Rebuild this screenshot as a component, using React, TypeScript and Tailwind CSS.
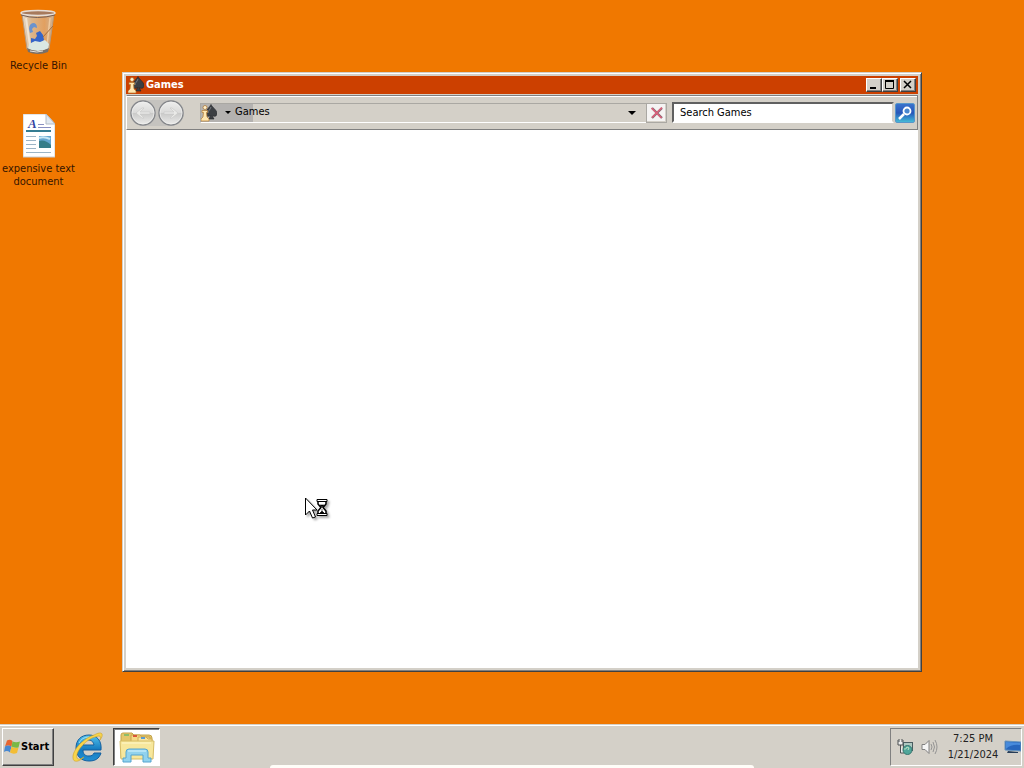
import type { ReactNode } from "react";

const RAISED =
  "border border-t-white border-l-white border-r-[#404040] border-b-[#404040] shadow-[inset_-1px_-1px_0_#808080]";

function RecycleBinIcon() {
  return (
    <svg width="38" height="46" viewBox="0 0 38 46" aria-hidden="true">
      <defs>
        <linearGradient id="glass" x1="0" x2="1">
          <stop offset="0" stopColor="#e4d9cb" />
          <stop offset="0.300" stopColor="#dbb58a" />
          <stop offset="0.700" stopColor="#e2a060" />
          <stop offset="1" stopColor="#cdb296" />
        </linearGradient>
      </defs>
      <path d="M3 5 L8 40 Q19 46 30 40 L35 5Z" fill="url(#glass)" stroke="#b89a7c" />
      <path d="M7 9 L11 37" stroke="#efe3d2" strokeWidth="2" />
      <path d="M31 9 L28 37" stroke="#edc99f" strokeWidth="1.500" />
      <path d="M10 20 q0-5 4-6 q4 0 4 5 l-3-1 -2 2 1 3-3 1Z" fill="#6b93ce" />
      <path d="M17 24 l4-2 3 4 1 5-3 3-4-1-6 1 0-5 4 1 2-3Z" fill="#3565c8" />
      <path d="M10 35 l6-3 5 1 5-2 4 4-1 5 Q18 44 9 40Z" fill="#dae8e3" />
      <path d="M8 39 Q19 45 30 39 L29 43 Q19 47 9 43Z" fill="#79706a" />
      <path d="M11 42 Q18 44 24 42" stroke="#e5e1db" fill="none" />
      <path d="M24 28 L34 17" stroke="#a86d39" />
      <ellipse cx="19" cy="4" rx="17" ry="2.500" fill="#a77a5c" stroke="#e7ddd5" strokeWidth="1.500" />
      <path d="M2 6 Q18 11 36 6" fill="none" stroke="#765e54" />
    </svg>
  );
}

function DocumentIcon() {
  return (
    <svg width="32" height="44" viewBox="0 0 32 44" aria-hidden="true">
      <path d="M0 0H23L32 10V43H0Z" fill="#fff" stroke="#c6ccd2" />
      <path d="M23 0V10H32Z" fill="#e2e9f0" stroke="#b2bcc8" />
      <text x="5" y="14" fontSize="13" fontStyle="italic" fontWeight="bold" fontFamily="Liberation Serif, serif" fill="#3445a3">A</text>
      <path d="M15 10.500H21M15 13.500H28" stroke="#8990c2" />
      <path d="M3 17H28" stroke="#347d92" strokeWidth="2" />
      <path d="M3 22.500H13M3 26.500H13M3 30.500H13M3 34.500H13M3 38.500H28" stroke="#9cb5c6" />
      <rect x="16" y="22" width="12" height="12" fill="#65a6cf" />
      <path d="M16 27 Q22 25 28 31V34H16Z" fill="#367d89" />
      <path d="M16 24Q21 22 27 25" stroke="#c8e7f4" strokeWidth="2" fill="none" />
    </svg>
  );
}

function GamesIcon() {
  return (
    <svg width="16" height="18" viewBox="0 0 16 18" aria-hidden="true">
      <path d="M10 0.500C9 3 4.500 6 4.500 9.500C4.500 12.500 8 13 9.500 11.500L8 15H13L11 11.500C13 13 16 12.500 16 9.500C16 6 11 3 10 0.500Z" fill="#3c3f43" stroke="#202226" strokeWidth="0.600" />
      <path d="M10 3C9 6 7 7 7 9" stroke="#777b80" fill="none" />
      <circle cx="4" cy="3.500" r="2" fill="#fff0c9" stroke="#a9702c" strokeWidth="0.700" />
      <path d="M1 6.500H6.500V8.500H5.500L6 13L8 15V17H0V15L2 13L2.500 8.500H1Z" fill="#ffe6b0" stroke="#b47b32" strokeWidth="0.700" />
    </svg>
  );
}

function NavIcon({ forward = false }: { forward?: boolean }) {
  return (
    <svg width="26" height="26" viewBox="0 0 26 26" aria-hidden="true">
      <defs>
        <linearGradient id={forward ? "forward-face" : "back-face"} x1="0" y1="0" x2="0" y2="1">
          <stop offset="0" stopColor="#efefee" />
          <stop offset="0.480" stopColor="#dadad9" />
          <stop offset="0.520" stopColor="#cacac9" />
          <stop offset="1" stopColor="#ececeb" />
        </linearGradient>
      </defs>
      <circle cx="13" cy="13" r="12" fill={forward ? "url(#forward-face)" : "url(#back-face)"} stroke="#85878b" strokeWidth="1.400" />
      <circle cx="13" cy="13" r="11" fill="none" stroke="#f1f1ef" strokeOpacity="0.700" />
      <path d={forward ? "M6 12H16L12 8H14L20 13L14 18H12L16 14H6Z" : "M20 12H10L14 8H12L6 13L12 18H14L10 14H20Z"} fill="#eaeae8" stroke="#c8c8c6" strokeWidth="0.600" />
    </svg>
  );
}

function WindowsIcon() {
  return (
    <svg width="16" height="16" viewBox="0 0 16 16" aria-hidden="true">
      <path d="M3 1.500Q6 0 8.500 2L7.500 7.500Q4 5.500 1 7.500Z" fill="#e76530" />
      <path d="M8.500 2.500Q12 4 16 2.500L14.500 8.500Q11 9.500 7.500 7.500Z" fill="#79b846" />
      <path d="M1 7.500Q4 5.500 7.500 7.500L6 13.500Q3 11 0 13Z" fill="#4888d0" />
      <path d="M7.500 7.500Q11 10 14.500 8.500L13 14Q9 15.500 6 13.500Z" fill="#f3bd35" />
    </svg>
  );
}

function ExplorerIcon() {
  return (
    <svg width="32" height="32" viewBox="0 0 32 32" aria-hidden="true">
      <defs>
        <linearGradient id="globe" x1="0" y1="0" x2="0" y2="1">
          <stop stopColor="#54c3ed" />
          <stop offset="0.550" stopColor="#147bc0" />
          <stop offset="1" stopColor="#248fd2" />
        </linearGradient>
      </defs>
      <path d="M29 19H11c0 4 2 6 6 6 3 0 4-1 5-3h7c-2 6-6 8-12 8C9 30 4 25 4 17S9 4 17 4c8 0 13 6 12 15ZM11 14h11c-1-4-3-5-6-5s-4 2-5 5Z" fill="url(#globe)" stroke="#135f9f" />
      <path d="M7 12Q10 6 17 6" stroke="#9fe2f5" strokeWidth="1" fill="none" />
      <path d="M22 4C31-1 32 4 28 9c2-6-2-4-8-2C10 12 3 23 5 27c1 2 4 1 7-1-6 6-11 5-11 1C0 19 12 7 22 4Z" fill="#f7d44b" stroke="#cfa127" strokeWidth="0.600" />
    </svg>
  );
}

function FolderIcon() {
  return (
    <svg width="36" height="32" viewBox="0 0 36 32" aria-hidden="true">
      <path d="M2 7V4Q2 2 4 2H13L15 4H30Q33 4 33 7V27H2Z" fill="#e3c66c" stroke="#c2a34b" />
      <path d="M5 3H10V5H5Z" fill="#8cbd6b" />
      <path d="M12 6V4H21L23 6H31V11H12Z" fill="#f6d987" stroke="#c8a34e" />
      <path d="M14 4H18V6H14Z" fill="#d95639" />
      <path d="M19 8V6H27L29 8H33V12H19Z" fill="#f9e59f" stroke="#d0ae55" />
      <path d="M22 6H26V8H22Z" fill="#5b9bd1" />
      <path d="M1 10H35L34 28H2Z" fill="#f7e79c" stroke="#d5bd66" />
      <path d="M3 12H32" stroke="#fff8cb" />
      <path d="M7 21Q7 18 10 18H26Q29 18 29 21V27H32V31H24V24H12V31H4V27H7Z" fill="#91d2ed" stroke="#54a4d0" />
      <path d="M9 20H27" stroke="#d8f5ff" fill="none" />
    </svg>
  );
}

function BusyCursor() {
  return (
    <svg width="26" height="24" viewBox="0 0 26 24" className="absolute left-[304px] top-[497px] drop-shadow-[2px_2px_1px_#aaaaaa]" aria-hidden="true">
      <path d="M1.500 1V18L5.500 14L8.500 21L11.500 20L8.500 13H13Z" fill="#fff" stroke="#000" />
      <path d="M14 4V7L17 10.500L14 14V17H22V14L19 10.500L22 7V4Z" fill="#fff" stroke="#000" strokeWidth="1.500" />
      <path d="M13 2.500H23V4.500H13ZM13 16.500H23V18.500H13Z" fill="#fff" stroke="#000" />
      <path d="M16 8H20L18 10ZM18 12V14M16 16L18 14L20 16Z" fill="#000" stroke="#000" strokeWidth="0.600" />
    </svg>
  );
}

function CaptionButton({ label, children }: { label: string; children: ReactNode }) {
  return (
    <button type="button" aria-label={label} className={`flex h-3.5 w-4 items-center justify-center bg-[#d4d0c8] ${RAISED}`}>
      <svg width="12" height="12" viewBox="0 0 12 12" aria-hidden="true">{children}</svg>
    </button>
  );
}

function GamesWindow() {
  return (
    <section aria-label="Games" className="absolute left-[122px] top-[72px] flex h-[600px] w-[800px] flex-col border border-t-[#d4d0c8] border-l-[#d4d0c8] border-r-[#404040] border-b-[#404040] bg-[#d4d0c8] p-[3px] shadow-[inset_1px_1px_0_#ffffff,inset_-1px_-1px_0_#808080]">
      <header className="flex h-[18px] shrink-0 items-center bg-[#cc4000] px-0.5">
        <GamesIcon />
        <h1 className="flex-1 pl-0.5 text-[11px] font-bold text-white">Games</h1>
        <div className="flex">
          <CaptionButton label="Minimize"><path d="M2 9H8" stroke="#000" strokeWidth="2" /></CaptionButton>
          <CaptionButton label="Maximize"><path d="M1.500 2V9.500H9.500V2Z" fill="none" stroke="#000" /><path d="M1 2H10" stroke="#000" strokeWidth="2" /></CaptionButton>
        </div>
        <div className="ml-0.5 flex">
          <CaptionButton label="Close"><path d="M2 2L9 9M9 2L2 9" stroke="#000" strokeWidth="1.500" /></CaptionButton>
        </div>
      </header>
      <div className="mt-px flex h-[35px] shrink-0 items-center border border-t-[#808080] border-l-white border-r-[#808080] border-b-[#808080] pl-[3px] pr-0.5 shadow-[inset_0_1px_0_#ffffff]">
        <div className="flex gap-0.5 rounded-full bg-[#c5c3bf]">
          <button type="button" aria-label="Back"><NavIcon /></button>
          <button type="button" aria-label="Forward"><NavIcon forward /></button>
        </div>
        <div className="ml-4 flex h-5 flex-1 items-center border-l border-t border-[#aaa8a3] border-b border-b-white bg-[linear-gradient(to_right,#b4b2b0_52px,#d4d0c8_52px)]">
          <GamesIcon />
          <button type="button" aria-label="Locations" className="flex w-[18px] justify-center pl-1">
            <svg width="6" height="4" viewBox="0 0 6 4" aria-hidden="true"><path d="M0 0H6L3 3Z" /></svg>
          </button>
          <span className="flex-1 text-[11px]">Games</span>
          <button type="button" aria-label="Previous locations" className="mr-2.5">
            <svg width="8" height="4" viewBox="0 0 8 4" aria-hidden="true"><path d="M0 0H8L4 4Z" /></svg>
          </button>
        </div>
        <button type="button" aria-label="Stop" className="flex h-5 w-[21px] items-center justify-center border border-[#aaa8a3] bg-[#f5f4f3] shadow-[inset_-1px_-1px_0_#d4d0c8]">
          <svg width="14" height="14" viewBox="0 0 14 14" aria-hidden="true">
            <path d="M2 2L12 12M12 2L2 12" stroke="#8c6c74" strokeWidth="2.400" />
            <path d="M1.500 2L11.500 12M12 1.500L2 11.500" stroke="#e0607c" strokeWidth="1.400" />
          </svg>
        </button>
        <input aria-label="Search Games" placeholder="Search Games" className="ml-[5px] h-[21px] w-[222px] rounded-none border-2 border-t-[#606060] border-l-[#606060] border-r-[#d4d0c8] border-b-white bg-white px-1.5 text-[11px] text-black outline-none placeholder:text-black" />
        <button type="button" aria-label="Search" className="ml-px flex h-5 w-5 items-center justify-center rounded-xs border border-[#5796ca] bg-linear-to-b from-[#3972cc] via-[#2856b9] to-[#46b9d5]">
          <svg width="16" height="16" viewBox="0 0 16 16" aria-hidden="true">
            <circle cx="10" cy="6" r="3.500" fill="#4a87cf" stroke="#fff" strokeWidth="1.800" />
            <path d="M7 9L2 14" stroke="#fff" strokeWidth="2.500" />
          </svg>
        </button>
      </div>
      <div className="flex-1 bg-white" />
    </section>
  );
}

function Taskbar() {
  return (
    <footer className="relative flex h-11 shrink-0 items-center border-t border-[#d4d0c8] bg-[#d4d0c8] pb-[3px] shadow-[inset_0_1px_0_#ffffff]">
      <button type="button" className={`ml-0.5 mt-1 flex h-[38px] w-[52px] items-center gap-px pl-px text-[11px] font-bold ${RAISED}`}>
        <WindowsIcon />Start
      </button>
      <button type="button" aria-label="Internet Explorer" className="ml-[18px] mt-1"><ExplorerIcon /></button>
      <button type="button" aria-label="Windows Explorer" className="ml-[9px] mt-1 flex h-[38px] w-[47px] items-center justify-center border border-t-[#404040] border-l-[#404040] border-r-white border-b-white bg-white shadow-[inset_1px_1px_0_#808080]"><FolderIcon /></button>
      <div className="ml-auto mr-0.5 mt-1 flex h-[38px] w-[132px] items-center border border-t-[#808080] border-l-[#808080] border-r-white border-b-white">
        <svg className="ml-1.5" width="16" height="17" viewBox="0 0 16 17" aria-hidden="true">
          <path d="M1 1V6H6V1M2 0V3M5 0V3M3.500 6V14H7" fill="#eee" stroke="#4c5052" />
          <rect x="6.500" y="3.500" width="9" height="8" fill="#adc8c1" stroke="#495c60" />
          <circle cx="10.500" cy="11" r="4.500" fill="#4fa69a" stroke="#38766e" />
          <path d="M7 10Q9 11 10 8L12 9L11 11" stroke="#c0e2c5" fill="none" />
        </svg>
        <svg className="ml-2" width="17" height="16" viewBox="0 0 17 16" aria-hidden="true">
          <path d="M1 5.500H4L8 1.500V14.500L4 10.500H1Z" fill="#f5f5f5" stroke="#808080" />
          <path d="M10 5Q12 8 10 11M12 3Q15 8 12 13M14 1Q18 8 14 15" fill="none" stroke="#949494" />
        </svg>
        <time dateTime="2024-01-21T19:25" className="flex flex-1 flex-col items-center pl-1 text-center text-[11px] leading-4 text-[#222]"><span>7:25 PM</span><span>1/21/2024</span></time>
        <button type="button" aria-label="Show desktop">
          <svg width="17" height="14" viewBox="0 0 17 14" aria-hidden="true">
            <path d="M1 1L17 2V11L1 10Z" fill="#2766bd" stroke="#6995bd" />
            <path d="M2 2L16 3V5Q7 4 2 9Z" fill="#488bdc" />
            <path d="M4 11L14 12V13H3Z" fill="#263d58" />
          </svg>
        </button>
      </div>
      <div className="absolute bottom-0 left-1/2 h-[3px] w-[484px] -translate-x-1/2 rounded-t-lg bg-[#fffdf8]" />
    </footer>
  );
}

export default function App() {
  return (
    <div className="flex min-h-screen cursor-default flex-col overflow-hidden bg-[#f07800] font-['DejaVu_Sans_Condensed','DejaVu_Sans',sans-serif] text-black">
      <main className="relative flex-1">
        <nav aria-label="Desktop icons" className="flex w-[77px] flex-col items-center pt-[9px] text-center text-[11px] leading-[13px] text-[#351500]">
          <a href="#recycle-bin" className="flex flex-col items-center gap-1">
            <RecycleBinIcon />
            <span>Recycle Bin</span>
          </a>
          <a href="#text-document" className="mt-[42px] flex flex-col items-center gap-1">
            <DocumentIcon />
            <span>expensive text<br />document</span>
          </a>
        </nav>
        <GamesWindow />
        <BusyCursor />
      </main>
      <Taskbar />
    </div>
  );
}
